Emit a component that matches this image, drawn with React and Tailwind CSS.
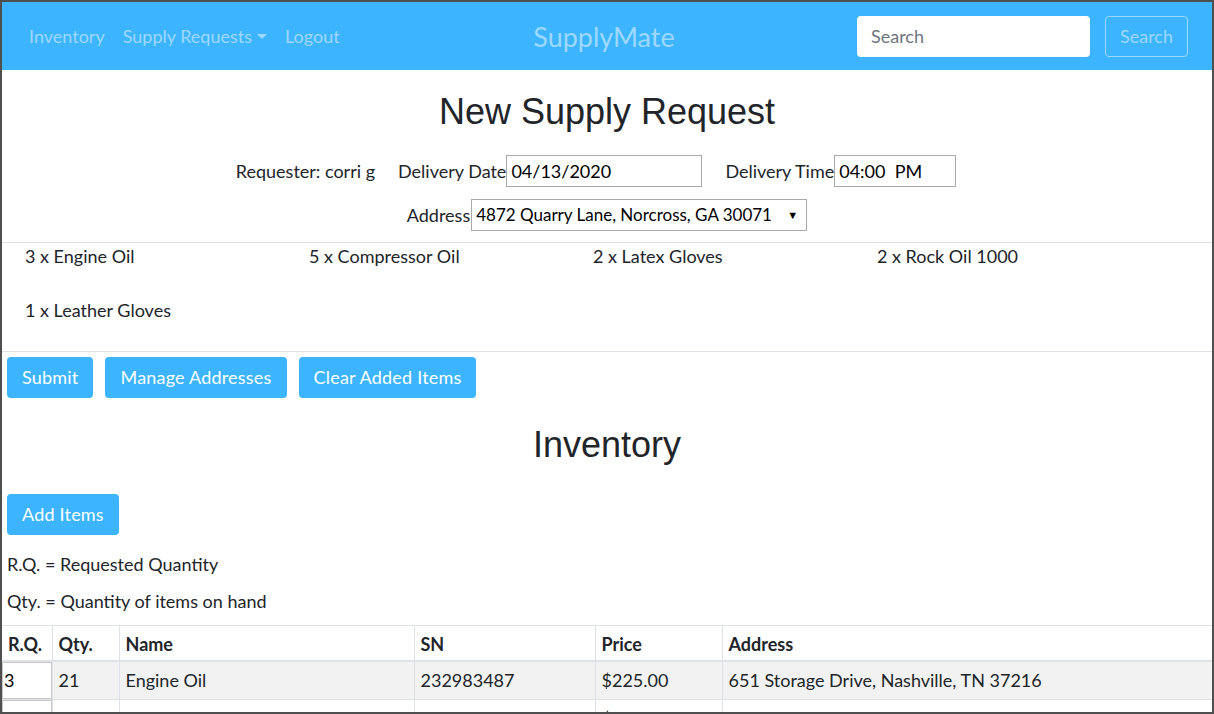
import React from 'react';

const items = [
  '3 x Engine Oil',
  '5 x Compressor Oil',
  '2 x Latex Gloves',
  '2 x Rock Oil 1000',
  '1 x Leather Gloves',
];

const rows = [
  { rq: '3', qty: '21', name: 'Engine Oil', sn: '232983487', price: '$225.00', address: '651 Storage Drive, Nashville, TN 37216' },
  { rq: '5', qty: '22', name: 'Compressor Oil', sn: '987473838', price: '$270.00', address: '651 Storage Drive, Nashville, TN 37216' },
];

const Navbar = () => (
  <nav className="flex items-center h-[68px] bg-[#3cb4ff] pl-[18px] pr-[24px]">
    <div className="flex-1 flex items-center text-[18px] text-[#9dd9ff]">
      <a className="px-[9px]">Inventory</a>
      <a className="px-[9px] flex items-center">
        Supply Requests
        <span className="inline-block ml-[5px] mt-[1px] border-t-[5px] border-x-[5px] border-b-0 border-t-[#9dd9ff] border-x-transparent" />
      </a>
      <a className="px-[9px]">Logout</a>
    </div>
    <div className="text-[27px] text-[#9dd9ff] leading-none">SupplyMate</div>
    <div className="flex-1 flex items-center justify-end gap-[15px]">
      <input
        type="text"
        placeholder="Search"
        className="w-[233px] h-[41px] rounded-[4px] bg-white px-[14px] text-[18px] text-[#495057] placeholder:text-[#6c757d] outline-none"
      />
      <button className="w-[83px] h-[41px] rounded-[4px] border border-[#9dd9ff] text-[18px] text-[#9dd9ff]">
        Search
      </button>
    </div>
  </nav>
);

const RequestForm = () => (
  <div>
    <h1 className="mt-[16px] text-center font-['Liberation_Sans',Arial,sans-serif] text-[36px] leading-[52px] text-[#212529]">
      New Supply Request
    </h1>
    <div className="mt-[17px] flex items-center justify-center h-[32px] pr-[22px]">
      <span>Requester: corri g</span>
      <span className="ml-[23px]">Delivery Date</span>
      <input
        readOnly
        value="04/13/2020"
        className="w-[196px] h-[32px] border border-[#a9a9a9] px-[4px] text-[18px] text-black outline-none"
      />
      <span className="ml-[23px]">Delivery Time</span>
      <input
        readOnly
        value="04:00  PM"
        className="w-[122px] h-[32px] border border-[#a9a9a9] px-[4px] text-[18px] text-black outline-none whitespace-pre"
      />
    </div>
    <div className="mt-[12px] flex items-center justify-center h-[32px]">
      <span>Address</span>
      <div className="ml-[1px] w-[336px] h-[32px] border border-[#a9a9a9] pl-[4px] pr-[8px] flex items-center justify-between text-black whitespace-nowrap">
        <span className="text-[17px]">4872 Quarry Lane, Norcross, GA 30071</span>
        <span className="text-[11px]">▼</span>
      </div>
    </div>
    <div className="mt-[11px] border-y border-[#dee2e6] pl-[23px] grid grid-cols-[repeat(4,284px)]">
      {items.map((item) => (
        <div key={item} className="leading-[27px] mb-[27px]">{item}</div>
      ))}
    </div>
    <div className="mt-[5px] px-[5px] flex gap-[12px]">
      {['Submit', 'Manage Addresses', 'Clear Added Items'].map((b) => (
        <button key={b} className="h-[41px] px-[15px] rounded-[4px] bg-[#3cb4ff] text-white text-[18px] tracking-[0.2px]">
          {b}
        </button>
      ))}
    </div>
  </div>
);

const InventoryTable = () => (
  <table className="w-full table-fixed border-collapse text-[18px] text-[#212529]">
    <colgroup>
      <col className="w-[50px]" />
      <col className="w-[67px]" />
      <col className="w-[295px]" />
      <col className="w-[181px]" />
      <col className="w-[127px]" />
      <col />
    </colgroup>
    <thead>
      <tr className="border-t border-[#dee2e6]">
        {['R.Q.', 'Qty.', 'Name', 'SN', 'Price', 'Address'].map((h, i) => (
          <th
            key={h}
            className={`text-left font-bold px-[6px] h-[35px] leading-[27px] pt-[3px] border-b-2 border-[#dee2e6] ${i > 0 ? 'border-l' : ''}`}
          >
            {h}
          </th>
        ))}
      </tr>
    </thead>
    <tbody>
      {rows.map((r, idx) => (
        <tr key={r.sn} className={idx % 2 === 0 ? 'bg-[#f2f2f2]' : 'bg-white'}>
          <td className="p-0 h-[37px] border-b border-[#dee2e6]">
            <input
              readOnly
              value={r.rq}
              className="w-full h-[37px] bg-white border border-[#c8c8c8] pl-[1px] text-[18px] text-black outline-none"
            />
          </td>
          <td className="px-[6px] border-l border-b border-[#dee2e6]">{r.qty}</td>
          <td className="px-[6px] border-l border-b border-[#dee2e6]">{r.name}</td>
          <td className="px-[6px] border-l border-b border-[#dee2e6]">{r.sn}</td>
          <td className="px-[6px] border-l border-b border-[#dee2e6]">{r.price}</td>
          <td className="px-[6px] border-l border-b border-[#dee2e6]">{r.address}</td>
        </tr>
      ))}
    </tbody>
  </table>
);

export default function App() {
  return (
    <div className="w-[1214px] h-[714px] border-2 border-[#4f4f4f] overflow-hidden bg-white font-['Lato','Open_Sans',sans-serif] text-[18px] text-[#212529]">
      <Navbar />
      <RequestForm />
      <h2 className="mt-[25px] text-center font-['Liberation_Sans',Arial,sans-serif] text-[36px] leading-[43px]">Inventory</h2>
      <div className="mt-[28px] px-[5px]">
        <button className="h-[41px] px-[15px] rounded-[4px] bg-[#3cb4ff] text-white text-[18px] tracking-[0.2px]">Add Items</button>
      </div>
      <p className="mt-[16px] px-[5px] leading-[27px]">R.Q. = Requested Quantity</p>
      <p className="mt-[10px] px-[5px] leading-[27px]">Qty. = Quantity of items on hand</p>
      <div className="mt-[10px]">
        <InventoryTable />
      </div>
    </div>
  );
}
